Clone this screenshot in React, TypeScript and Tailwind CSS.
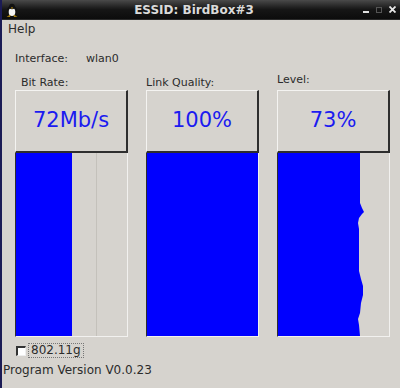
export default function App() {
  const font = { fontFamily: '"DejaVu Sans", "Noto Sans", sans-serif' };
  return (
    <div
      className="w-[400px] h-[388px] bg-[#d6d3ce] border-l-2 border-[#1b1b55] flex flex-col text-[#2b2b2b] overflow-hidden"
      style={font}
    >
      {/* title bar */}
      <div className="h-[20px] bg-gradient-to-b from-[#4a4a4a] via-[#161616] to-[#0c0c0c] flex items-center relative border-b border-[#2a2a2a]">
        <svg width="12" height="14" viewBox="0 0 12 14" className="ml-[4px]">
          <ellipse cx="6" cy="8" rx="5" ry="5.5" fill="#111" />
          <ellipse cx="6" cy="9" rx="3.3" ry="4" fill="#f4f4f4" />
          <circle cx="6" cy="3.5" r="2.8" fill="#111" />
          <path d="M5 4.5 L7 4.5 L6 6 Z" fill="#e8b010" />
          <path d="M0.5 13.5 L4.5 12 L4 13.8 Z M11.5 13.5 L7.5 12 L8 13.8 Z" fill="#e8b010" />
        </svg>
        <div className="absolute left-0 right-0 text-center text-[12px] font-bold text-[#dadada] leading-[20px] pr-[14px]">
          ESSID: BirdBox#3
        </div>
        <div className="ml-auto flex items-center gap-[7px] pr-[4px]">
          <div className="w-[6px] h-[2px] bg-[#e0e0e0] mt-[5px]" />
          <div className="w-[6px] h-[6px] border border-[#555]" />
          <svg width="7" height="7" viewBox="0 0 7 7">
            <path d="M0.5 0.5 L6.5 6.5 M6.5 0.5 L0.5 6.5" stroke="#e6e6e6" strokeWidth="1.8" />
          </svg>
        </div>
      </div>

      {/* menu */}
      <div className="h-[18px] pl-[6px] text-[12px] leading-[18px]">Help</div>

      {/* interface */}
      <div className="mt-[14px] h-[14px] pl-[13px] flex text-[11px] leading-[14px]">
        <span className="w-[71px]">Interface:</span>
        <span>wlan0</span>
      </div>

      {/* meters */}
      <div className="mt-[10px] pl-[13px] grid grid-cols-[113px_113px_113px] gap-x-[18px] text-[11px]">
        <Meter label="Bit Rate:" labelClass="pl-[6px]" value="72Mb/s">
          <div className="h-full flex">
            <div className="w-[56px] bg-[#0000ff]" />
            <div className="w-[25px] border-r border-[#c4c1bb]" />
          </div>
        </Meter>
        <Meter label="Link Quality:" labelClass="" value="100%">
          <div className="h-full bg-[#0000ff]" />
        </Meter>
        <Meter label="Level:" labelClass="-mt-[3px] mb-[3px]" value="73%">
          <svg viewBox="0 0 111 183" preserveAspectRatio="none" className="block w-full h-full">
            <polygon
              fill="#0000ff"
              points="0,0 82,0 82,50 84,55 86,59 84,61 81,65 80,70 81,76 81,118 83,126 85,133 85,142 83,150 82,160 80,166 81,172 82,183 0,183"
            />
          </svg>
        </Meter>
      </div>

      {/* checkbox */}
      <div className="mt-[6px] pl-[14px] flex items-center gap-[2px] text-[12px]">
        <div className="w-[10px] h-[10px] bg-white border-t-2 border-l-2 border-[#333] border-r border-b border-r-[#eee] border-b-[#eee]" />
        <div className="border border-dotted border-[#777] px-[2px] h-[15px] leading-[13px]">802.11g</div>
      </div>
      <div className="mt-[5px] pl-[1px] text-[12px] leading-[14px]">Program Version V0.0.23</div>
    </div>
  );
}

function Meter({
  label,
  labelClass,
  value,
  children,
}: {
  label: string;
  labelClass: string;
  value: string;
  children: React.ReactNode;
}) {
  return (
    <div className="flex flex-col">
      <div className={`h-[14px] leading-[14px] ${labelClass}`}>{label}</div>
      <div className="h-[63px] border-t border-l border-[#f4f3f1] border-r-2 border-b-2 border-r-[#2e2e2e] border-b-[#2e2e2e] flex items-center justify-center text-[21px] text-[#1b1bf0]">
        {value}
      </div>
      <div className="h-[184px] border-l border-[#2e2e2e] border-r border-b border-r-[#f2f1ef] border-b-[#f2f1ef]">
        {children}
      </div>
    </div>
  );
}
